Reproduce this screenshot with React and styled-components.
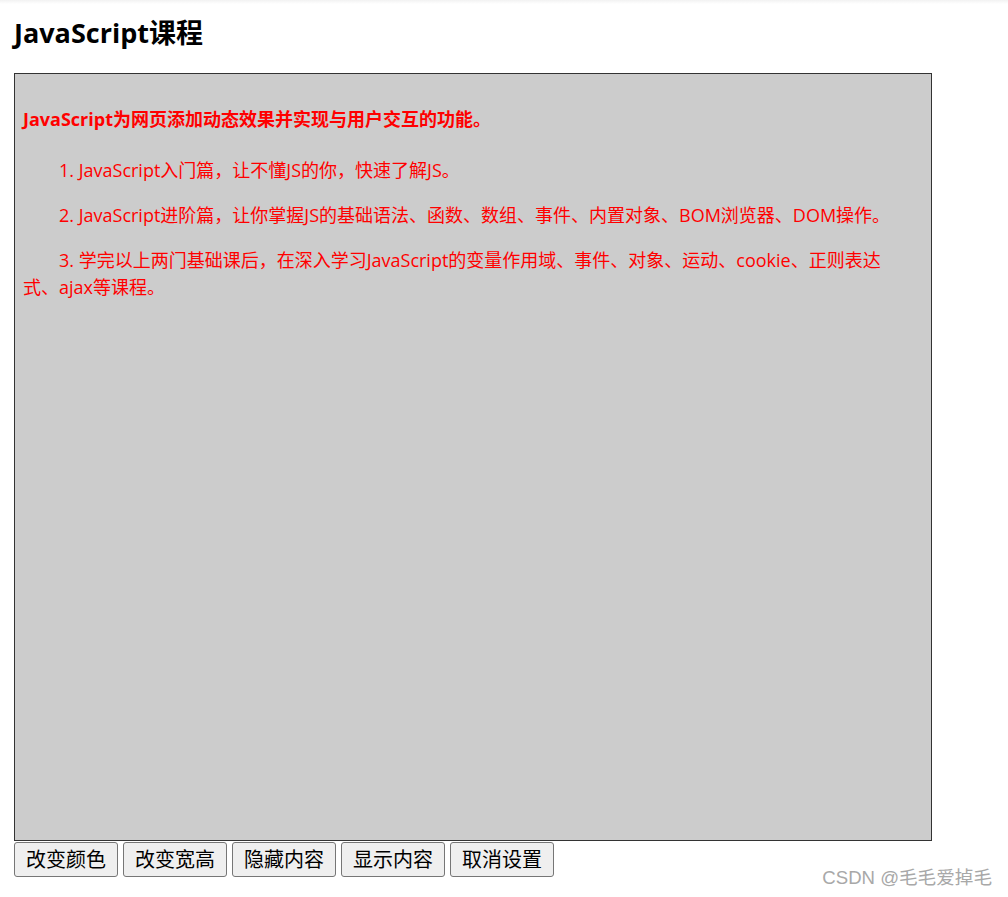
import React from "react";
import styled, { createGlobalStyle } from "styled-components";

const Global = createGlobalStyle`
  html, body { margin: 0; padding: 0; background: #fff; }
  body { font-family: "Open Sans", "Noto Sans CJK SC", sans-serif; }
`;

const Page = styled.div`
  position: relative;
  width: 1008px;
  height: 897px;
  padding: 0 14px;
  box-sizing: border-box;
  background: linear-gradient(#f2f2f2, #fff 4px);
`;

const Title = styled.h2`
  margin: 0;
  padding: 17px 0 24px;
  font-size: 27px;
  line-height: 32px;
  font-weight: 700;
  color: #000;
`;

const Box = styled.div`
  width: 918px;
  height: 768px;
  box-sizing: border-box;
  border: 1px solid #333;
  background: #ccc;
  padding: 8px 30px 8px 8px;
  color: red;
  font-size: 18px;
  line-height: 27px;
  overflow: hidden;
`;

const Lead = styled.h4`
  margin: 24px 0 24px;
  font-size: 18px;
  font-weight: 700;
`;

const Para = styled.p`
  margin: 0 0 18px;
  text-indent: 2em;
  font-size: 18px;
`;

const Buttons = styled.div`
  display: flex;
  gap: 5px;
  margin-top: 1px;
`;

const Btn = styled.button`
  width: 104px;
  height: 35px;
  padding: 0;
  font-family: "Open Sans", "Noto Sans CJK SC", sans-serif;
  font-size: 20px;
  line-height: 1;
  color: #000;
  background: #efefef;
  border: 1px solid #767676;
  border-radius: 3px;
`;

const Watermark = styled.div`
  position: absolute;
  right: 16px;
  top: 866px;
  font-family: "Liberation Sans", "Noto Sans CJK SC", sans-serif;
  font-size: 18.6px;
  line-height: 24px;
  color: #a8a8a8;
`;

export default function App() {
  return (
    <>
      <Global />
      <Page>
        <Title>JavaScript课程</Title>
        <Box>
          <Lead>JavaScript为网页添加动态效果并实现与用户交互的功能。</Lead>
          <Para>1. JavaScript入门篇，让不懂JS的你，快速了解JS。</Para>
          <Para>2. JavaScript进阶篇，让你掌握JS的基础语法、函数、数组、事件、内置对象、BOM浏览器、DOM操作。</Para>
          <Para>3. 学完以上两门基础课后，在深入学习JavaScript的变量作用域、事件、对象、运动、cookie、正则表达式、ajax等课程。</Para>
        </Box>
        <Buttons>
          <Btn>改变颜色</Btn>
          <Btn>改变宽高</Btn>
          <Btn>隐藏内容</Btn>
          <Btn>显示内容</Btn>
          <Btn>取消设置</Btn>
        </Buttons>
        <Watermark>CSDN @毛毛爱掉毛</Watermark>
      </Page>
    </>
  );
}
